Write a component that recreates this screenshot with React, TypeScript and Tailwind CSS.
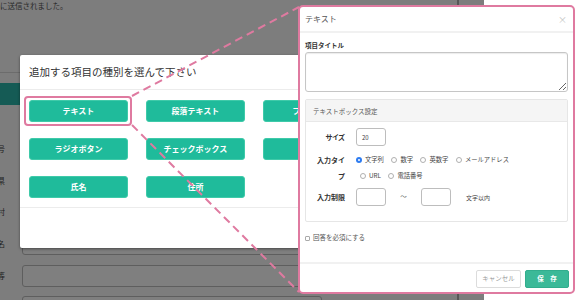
import React from 'react'

const jp = "font-['Noto_Sans_CJK_JP','Noto_Sans',sans-serif]"

const types = ['テキスト', '段落テキスト', 'プルダウン', 'ラジオボタン', 'チェックボックス', '日付', '氏名', '住所']

const formRows = ['郵便番号', '都道府県', '市区町村', '氏名', '建物名等', '電話番号']

const inputTypes = [
  { label: '文字列', checked: true },
  { label: '数字' },
  { label: '英数字' },
  { label: 'メールアドレス' },
  { label: 'URL' },
  { label: '電話番号' },
]

function Radio({ checked }: { checked?: boolean }) {
  if (checked) {
    return (
      <span className="w-[6px] h-[6px] rounded-full bg-[#2e7cf0] flex items-center justify-center shrink-0">
        <span className="w-[2px] h-[2px] rounded-full bg-white" />
      </span>
    )
  }
  return <span className="w-[6px] h-[6px] rounded-full border border-[#b0b0b0] bg-white shrink-0" />
}

// 背景の画面（暗くなった元ページ）
function BackdropPage() {
  return (
    <div className="w-[484px] h-full flex bg-[#7d7d7d]">
      <div className="w-[457px] flex flex-col">
        <div className="shrink-0 h-[73px] border-b border-[#6c6c6c] text-[7.5px] leading-[10px] pt-[1px] text-[#2a2a2a]">
          に送信されました。
        </div>
        <div className="shrink-0 mt-[10px] h-[22px] bg-[#155b55]" />
        <div className="shrink-0 mt-[28px] flex flex-col">
          {formRows.map((label) => (
            <div key={label} className="shrink-0 h-[31.7px] flex items-center">
              <div className="w-[5px] overflow-hidden flex justify-end whitespace-nowrap text-[8px] leading-[10px] text-[#222]">
                {label}
              </div>
              <div className="ml-[17px] w-[300px] h-[22px] border border-[#5e5e5e] rounded-[3px] bg-[#7f7f7f]" />
            </div>
          ))}
        </div>
      </div>
      <div className="flex-1 border-l-2 border-[#575757]" />
    </div>
  )
}

// 種別選択モーダル
function TypeModal() {
  return (
    <div className="absolute left-[20px] top-[55px] w-[352px] h-[193px] bg-white rounded-[2px] shadow-[0_1px_3px_rgba(0,0,0,0.45)] flex flex-col">
      <div className="h-[35px] border-b border-[#ececec] flex items-center px-[9px] text-[10.5px] text-[#333]">
        追加する項目の種別を選んで下さい
      </div>
      <div className="pt-[10px] pb-[9px] pl-[9px] grid grid-cols-[99px_99px_99px] gap-x-[18px] gap-y-[16px] border-b border-[#ececec]">
        {types.map((t) => (
          <div
            key={t}
            className="h-[22px] rounded-[3px] bg-[#1fbb9b] border border-[#3fcaa9] flex items-center justify-center text-white text-[8px] font-bold"
          >
            {t}
          </div>
        ))}
      </div>
      <div className="flex-1" />
    </div>
  )
}

// テキスト項目の設定パネル
function SettingsPanel() {
  return (
    <div className="absolute left-[298px] top-[5px] w-[277px] h-[289px] border-2 border-[#df7aa0] rounded-[5px] bg-white flex flex-col">
      <div className="h-[26px] border-b-2 border-[#f1f1f1] flex items-center justify-between pl-[5px] pr-[6px]">
        <span className="text-[8px] text-[#555]">テキスト</span>
        <span className="text-[9px] leading-none text-[#c4c4c4]">×</span>
      </div>

      <div className="flex-1 flex flex-col px-[5px] pt-[8px]">
        <div className="text-[6.5px] leading-[8px] font-bold text-[#333]">項目タイトル</div>
        <textarea
          readOnly
          className="mt-[3px] block w-full h-[40px] border border-[#c6c6c6] rounded-[3px] shadow-[inset_0_1px_1px_rgba(0,0,0,0.08)] resize-y outline-none"
        />

        <div className="mt-[7px] border border-[#e6e6e6] rounded-[2px] flex flex-col">
          <div className="h-[22px] bg-[#f5f5f5] border-b border-[#e8e8e8] flex items-center pl-[7px] text-[6.5px] leading-[8px] text-[#555]">
            テキストボックス設定
          </div>
          <div className="flex flex-col pt-[6px] pb-[15px]">
            <div className="flex items-center h-[18px]">
              <div className="ml-[8px] w-[31px] text-right text-[7px] font-bold text-[#333] [font-feature-settings:'palt']">サイズ</div>
              <div className="ml-[11px] w-[30px] h-[18px] border border-[#bdbdbd] rounded-[3px] flex items-center pl-[5px] text-[6px] text-[#444]">
                20
              </div>
            </div>

            <div className="flex mt-[6px]">
              <div className="ml-[8px] w-[31px] text-right text-[7px] leading-[16px] font-bold text-[#333]">入力タイプ</div>
              <div className="ml-[11px] w-[162px] flex flex-wrap">
                {inputTypes.map((it, i) => (
                  <div
                    key={it.label}
                    className={`h-[16px] flex items-center gap-[3px] mr-[3.5px] ${i === 0 ? '' : 'ml-[4px]'}`}
                  >
                    <Radio checked={it.checked} />
                    <span className="text-[6.3px] text-[#444] whitespace-nowrap">{it.label}</span>
                  </div>
                ))}
              </div>
            </div>

            <div className="flex items-center h-[18px] mt-[4px]">
              <div className="ml-[8px] w-[31px] text-right text-[7px] font-bold text-[#333]">入力制限</div>
              <div className="ml-[11px] w-[30px] h-[18px] border border-[#bdbdbd] rounded-[3px]" />
              <div className="w-[35px] text-center text-[6.5px] text-[#666]">〜</div>
              <div className="w-[30px] h-[18px] border border-[#bdbdbd] rounded-[3px]" />
              <div className="ml-[15px] text-[6px] text-[#444]">文字以内</div>
            </div>
          </div>
        </div>

        <div className="mt-[11px] h-[10px] flex items-center gap-[3px]">
          <span className="w-[5px] h-[5px] border border-[#aaa] rounded-[1px] bg-white" />
          <span className="text-[6.5px] text-[#555]">回答を必須にする</span>
        </div>
      </div>

      <div className="h-[30px] border-t-2 border-[#f1f1f1] flex items-start justify-end gap-[4px] pt-[6px] pr-[4px]">
        <div className="w-[45px] h-[18px] border border-[#dcdcdc] rounded-[2px] flex items-center justify-center text-[6.5px] text-[#9a9a9a]">
          キャンセル
        </div>
        <div className="w-[44px] h-[18px] bg-[#3bb998] border border-[#32ad8d] rounded-[2px] flex items-center justify-center text-[6.5px] font-bold text-white">
          保　存
        </div>
      </div>
    </div>
  )
}

export default function App() {
  return (
    <div className={`relative w-[580px] h-[300px] overflow-hidden bg-white ${jp}`}>
      <BackdropPage />
      <TypeModal />

      {/* 選択中のボタンを囲む枠 */}
      <div className="absolute left-[24px] top-[96px] w-[108px] h-[30px] border-2 border-[#df7aa0] rounded-[4px]" />

      {/* 引き出し線 */}
      <svg className="absolute inset-0 pointer-events-none" width="580" height="300">
        <line x1="132" y1="96" x2="299" y2="7" stroke="#df7aa0" strokeWidth="2" strokeDasharray="8 5" />
        <line x1="132" y1="125" x2="299" y2="292" stroke="#df7aa0" strokeWidth="2" strokeDasharray="8 5" />
      </svg>

      <SettingsPanel />
    </div>
  )
}
